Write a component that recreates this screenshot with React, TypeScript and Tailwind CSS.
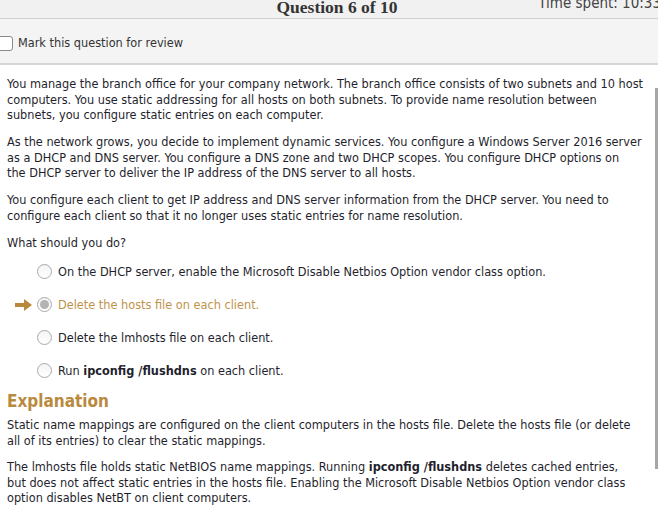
const body = "font-['DejaVu_Sans_Condensed','DejaVu_Sans',sans-serif]"

function Radio({ selected }: { selected?: boolean }) {
  return (
    <span className="flex h-[15px] w-[15px] shrink-0 items-center justify-center rounded-full border border-[#a9a9a9] bg-gradient-to-b from-[#f4f4f4] to-white">
      {selected && <span className="h-[9px] w-[9px] rounded-full bg-[#b3b3b3]" />}
    </span>
  )
}

function Option({
  children,
  selected,
}: {
  children: React.ReactNode
  selected?: boolean
}) {
  return (
    <div className="flex h-[33px] items-center">
      <span className="flex w-[37px] justify-end pr-[5px]">
        {selected && (
          <svg width="17" height="12" viewBox="0 0 17 12">
            <path d="M0 4h9V0l8 6-8 6V8H0z" fill="#b8893b" />
          </svg>
        )}
      </span>
      <Radio selected={selected} />
      <span className={selected ? 'ml-[6px] text-[#c0934c]' : 'ml-[6px]'}>
        {children}
      </span>
    </div>
  )
}

export default function App() {
  return (
    <div
      className={`relative h-[517px] w-[658px] overflow-hidden bg-white text-[12.6px] leading-[15.5px] text-[#1f1f2e] ${body}`}
    >
      {/* header strip */}
      <div className="relative h-[19px] overflow-hidden border-b border-[#d0d0d0] bg-[#f1f1f1]">
        <div className="flex justify-center">
          <span className="-mt-[3px] pl-[16px] font-['Liberation_Serif',serif] text-[17.5px] font-bold leading-[20px] text-[#333]">
            Question 6 of 10
          </span>
        </div>
        <span className="absolute right-[-3px] top-[-6px] text-[15px] leading-[18px] text-[#444]">
          Time spent: 10:33
        </span>
      </div>

      {/* review bar */}
      <div className="flex h-[46px] items-center border-b-2 border-[#d6d6d6] bg-[#f4f4f4] pt-[4px]">
        <span className="-ml-[3px] h-[15px] w-[16px] rounded-[3px] border border-[#8a8a8a] bg-white" />
        <span className="ml-[5px] text-[#333]">Mark this question for review</span>
      </div>

      <div className="whitespace-nowrap px-[7px] pt-[11px]">
        <p className="mb-[11.5px]">
          You manage the branch office for your company network. The branch office consists of two subnets and 10 host
          <br />
          computers. You use static addressing for all hosts on both subnets. To provide name resolution between
          <br />
          subnets, you configure static entries on each computer.
        </p>
        <p className="mb-[11.5px]">
          As the network grows, you decide to implement dynamic services. You configure a Windows Server 2016 server
          <br />
          as a DHCP and DNS server. You configure a DNS zone and two DHCP scopes. You configure DHCP options on
          <br />
          the DHCP server to deliver the IP address of the DNS server to all hosts.
        </p>
        <p className="mb-[11.5px]">
          You configure each client to get IP address and DNS server information from the DHCP server. You need to
          <br />
          configure each client so that it no longer uses static entries for name resolution.
        </p>
        <p>What should you do?</p>

        <div className="-ml-[7px] mt-[5px]">
          <Option>On the DHCP server, enable the Microsoft Disable Netbios Option vendor class option.</Option>
          <Option selected>Delete the hosts file on each client.</Option>
          <Option>Delete the lmhosts file on each client.</Option>
          <Option>
            Run <b>ipconfig /flushdns</b> on each client.
          </Option>
        </div>

        <h2 className="mt-[4px] text-[17px] font-bold leading-[20px] text-[#b98a3e]">Explanation</h2>
        <p className="mb-[11px] mt-[6px]">
          Static name mappings are configured on the client computers in the hosts file. Delete the hosts file (or delete
          <br />
          all of its entries) to clear the static mappings.
        </p>
        <p>
          The lmhosts file holds static NetBIOS name mappings. Running <b>ipconfig /flushdns</b> deletes cached entries,
          <br />
          but does not affect static entries in the hosts file. Enabling the Microsoft Disable Netbios Option vendor class
          <br />
          option disables NetBT on client computers.
        </p>
      </div>

      {/* scrollbar thumb */}
      <div className="absolute right-0 top-[88px] h-[381px] w-[3px] bg-[#a6a6a6]" />
    </div>
  )
}
